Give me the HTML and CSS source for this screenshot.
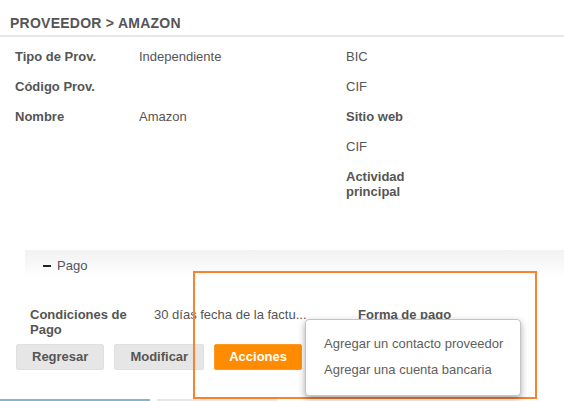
FILE: index.html
```html
<!DOCTYPE html>
<html lang="es">
<head>
<meta charset="utf-8">
<title>Proveedor &gt; Amazon</title>
<link rel="stylesheet" href="styles.css">
</head>
<body>
<div class="page">
  <h1 class="title">Proveedor &gt; Amazon</h1>

  <div class="info">
    <div class="col col-left">
      <div class="row"><span class="lbl">Tipo de Prov.</span><span class="val">Independiente</span></div>
      <div class="row"><span class="lbl">Código Prov.</span><span class="val"></span></div>
      <div class="row"><span class="lbl">Nombre</span><span class="val">Amazon</span></div>
    </div>
    <div class="col col-right">
      <div class="row"><span class="lbl2 plain">BIC</span></div>
      <div class="row"><span class="lbl2 plain">CIF</span></div>
      <div class="row"><span class="lbl2">Sitio web</span></div>
      <div class="row"><span class="lbl2 plain">CIF</span></div>
      <div class="row"><span class="lbl2">Actividad principal</span></div>
    </div>
  </div>

  <div class="section-head"><span class="dash"></span><span class="section-title">Pago</span></div>

  <div class="pay-row">
    <span class="pay-lbl">Condiciones de Pago</span>
    <span class="pay-val">30 días fecha de la factu...</span>
    <span class="pay-lbl2">Forma de pago</span>
  </div>

  <div class="actions">
    <button class="btn">Regresar</button>
    <button class="btn">Modificar</button>
    <button class="btn btn-primary">Acciones</button>
  </div>

  <div class="tabs">
    <span class="tab tab-active"></span>
    <span class="tab tab-idle"></span>
  </div>

  <div class="highlight"></div>

  <ul class="menu">
    <li class="menu-item">Agregar un contacto proveedor</li>
    <li class="menu-item">Agregar una cuenta bancaria</li>
  </ul>
</div>
</body>
</html>
```

FILE: styles.css
```css
html, body {
  margin: 0;
  padding: 0;
  background: #ffffff;
}

body {
  font-family: "Liberation Sans", Arial, sans-serif;
  font-size: 13px;
  color: #555555;
  width: 564px;
  height: 401px;
  overflow: hidden;
}

.page {
  position: relative;
  height: 401px;
}

.title {
  margin: 0;
  padding: 15px 10px 4px;
  font-size: 14px;
  line-height: 16px;
  font-weight: bold;
  text-transform: uppercase;
  letter-spacing: 0.25px;
  color: #555555;
  border-bottom: 2px solid #e6e6e6;
}

.info {
  display: flex;
  margin-top: 5px;
  padding-left: 15px;
}

.col-left {
  width: 331px;
}

.row {
  display: flex;
  padding: 7px 0 8px;
  line-height: 15px;
}

.lbl {
  width: 124px;
  font-weight: bold;
}

.lbl2 {
  width: 90px;
  font-weight: bold;
}

.lbl2.plain {
  font-weight: normal;
}

.section-head {
  display: flex;
  align-items: center;
  margin: 43px 0 0 25px;
  padding: 8px 0 3px 18px;
  line-height: 15px;
  background: linear-gradient(to bottom, #f2f2f2, #fefefe);
}

.dash {
  width: 8px;
  height: 2px;
  background: #222222;
  margin-right: 6px;
}

.section-title {
  color: #505560;
}

.pay-row {
  display: flex;
  margin-top: 31px;
  padding-left: 30px;
  line-height: 15px;
}

.pay-lbl {
  width: 112px;
  margin-right: 12px;
  font-weight: bold;
}

.pay-val {
  width: 204px;
  white-space: nowrap;
}

.pay-lbl2 {
  font-weight: bold;
  white-space: nowrap;
}

.actions {
  display: flex;
  gap: 10px;
  margin-top: 7px;
  padding-left: 16px;
}

.btn {
  height: 26px;
  padding: 0 15px;
  border: 1px solid #e0e0e0;
  border-radius: 2px;
  background: #e6e6e6;
  color: #555555;
  font-family: "Liberation Sans", Arial, sans-serif;
  font-size: 13px;
  font-weight: bold;
  line-height: 24px;
  cursor: pointer;
}

.btn-primary {
  padding: 0 14px;
  background: #ff8c00;
  border-color: #ff9a20;
  color: #ffffff;
}

.tabs {
  display: flex;
  gap: 7px;
  margin-top: 29px;
}

.tab {
  height: 2px;
}

.tab-active {
  width: 150px;
  background: #7db8d4;
}

.tab-idle {
  width: 120px;
  background: #e6e6e6;
}

.highlight {
  position: absolute;
  left: 193px;
  top: 271px;
  width: 344px;
  height: 128px;
  box-sizing: border-box;
  border: 2px solid #f98230;
  pointer-events: none;
}

.menu {
  position: absolute;
  left: 305px;
  top: 319px;
  width: 216px;
  box-sizing: border-box;
  margin: 0;
  padding: 11px 0 12px;
  list-style: none;
  background: #ffffff;
  border: 1px solid #c4c4c4;
  border-radius: 4px;
  box-shadow: 0 3px 7px rgba(0, 0, 0, 0.35);
}

.menu-item {
  padding-left: 18px;
  line-height: 26px;
  color: #606060;
  white-space: nowrap;
}
```
